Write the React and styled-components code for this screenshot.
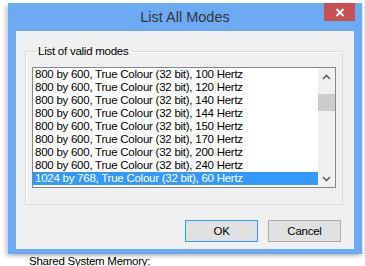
import React from "react";
import styled, { createGlobalStyle } from "styled-components";

const GlobalStyle = createGlobalStyle`
  html, body {
    margin: 0;
    padding: 0;
    background: #fff;
    overflow: hidden;
  }
  body {
    font-family: "Liberation Sans", Arial, sans-serif;
  }
`;

const Page = styled.div`
  width: 365px;
  height: 266px;
  overflow: hidden;
  padding: 3px 0 0 8px;
  box-sizing: border-box;
`;

const Window = styled.div`
  width: 354px;
  height: 251px;
  box-sizing: border-box;
  background: #6cabf4;
  display: flex;
  flex-direction: column;
  padding: 0 8px 5px 8px;
  box-shadow: -3px 2px 4px rgba(0, 0, 0, 0.18), 2px 2px 3px rgba(0, 0, 0, 0.12);
`;

const TitleBar = styled.div`
  height: 28px;
  display: grid;
  grid-template-columns: 31px 1fr 31px;
  align-items: start;
`;

const Title = styled.div`
  grid-column: 2;
  text-align: center;
  font-size: 14.5px;
  color: #363636;
  line-height: 29px;
`;

const CloseButton = styled.div`
  grid-column: 3;
  width: 31px;
  height: 18px;
  margin-left: 1px;
  background: #c75050;
  display: flex;
  align-items: center;
  justify-content: center;
`;

const Client = styled.div`
  flex: 1;
  background: #f0f0f0;
  display: flex;
  flex-direction: column;
  padding: 13px 11px 7px 9px;
  font-size: 11.5px;
  letter-spacing: -0.25px;
`;

const Group = styled.fieldset`
  margin: 0;
  padding: 9px 6px 16px 6px;
  border: 1px solid #dcdcdc;
  box-shadow: inset 1px 1px 0 #fff;
  min-width: 0;
`;

const Legend = styled.legend`
  color: #000;
  padding: 0 2px;
  margin-left: 4px;
  line-height: 14px;
`;

const ListBox = styled.div`
  height: 119px;
  border: 1px solid #828790;
  background: #fff;
  display: flex;
`;

const Rows = styled.div`
  flex: 1;
  overflow: hidden;
`;

const Row = styled.div`
  height: 13px;
  line-height: 13px;
  padding-left: 2px;
  white-space: nowrap;
  color: ${(p) => (p.$selected ? "#fff" : "#000")};
  background: ${(p) => (p.$selected ? "#3399ff" : "transparent")};
`;

const ScrollBar = styled.div`
  width: 17px;
  background: #f0f0f0;
  display: flex;
  flex-direction: column;
`;

const Arrow = styled.div`
  height: 17px;
  display: flex;
  align-items: center;
  justify-content: center;
`;

const Track = styled.div`
  flex: 1;
  padding-top: 9px;
`;

const Thumb = styled.div`
  height: 17px;
  background: #cdcdcd;
`;

const Buttons = styled.div`
  margin-top: auto;
  display: flex;
  justify-content: flex-end;
  gap: 10px;
  padding-right: 2px;
`;

const Button = styled.div`
  width: 73px;
  height: 22px;
  box-sizing: border-box;
  border: 1px solid ${(p) => (p.$default ? "#3399ff" : "#adadad")};
  background: #e1e1e1;
  color: #000;
  display: flex;
  align-items: center;
  justify-content: center;
`;

const Behind = styled.div`
  font-size: 11.5px;
  letter-spacing: -0.25px;
  line-height: 14px;
  margin-left: 21px;
  color: #000;
`;

const modes = [
  "800 by 600, True Colour (32 bit), 100 Hertz",
  "800 by 600, True Colour (32 bit), 120 Hertz",
  "800 by 600, True Colour (32 bit), 140 Hertz",
  "800 by 600, True Colour (32 bit), 144 Hertz",
  "800 by 600, True Colour (32 bit), 150 Hertz",
  "800 by 600, True Colour (32 bit), 170 Hertz",
  "800 by 600, True Colour (32 bit), 200 Hertz",
  "800 by 600, True Colour (32 bit), 240 Hertz",
  "1024 by 768, True Colour (32 bit), 60 Hertz",
];

const Chevron = ({ up }) => (
  <svg width="9" height="6" viewBox="0 0 9 6">
    <path
      d={up ? "M1 5 L4.5 1.5 L8 5" : "M1 1 L4.5 4.5 L8 1"}
      fill="none"
      stroke="#606060"
      strokeWidth="1.6"
    />
  </svg>
);

export default function App() {
  return (
    <Page>
      <GlobalStyle />
      <Window>
        <TitleBar>
          <Title>List All Modes</Title>
          <CloseButton>
            <svg width="10" height="9" viewBox="0 0 10 9">
              <path d="M1.5 1 L8.5 8 M8.5 1 L1.5 8" stroke="#fff" strokeWidth="2" />
            </svg>
          </CloseButton>
        </TitleBar>
        <Client>
          <Group>
            <Legend>List of valid modes</Legend>
            <ListBox>
              <Rows>
                {modes.map((m, i) => (
                  <Row key={m} $selected={i === modes.length - 1}>
                    {m}
                  </Row>
                ))}
              </Rows>
              <ScrollBar>
                <Arrow><Chevron up /></Arrow>
                <Track><Thumb /></Track>
                <Arrow><Chevron /></Arrow>
              </ScrollBar>
            </ListBox>
          </Group>
          <Buttons>
            <Button $default>OK</Button>
            <Button>Cancel</Button>
          </Buttons>
        </Client>
      </Window>
      <Behind>Shared System Memory:</Behind>
    </Page>
  );
}
